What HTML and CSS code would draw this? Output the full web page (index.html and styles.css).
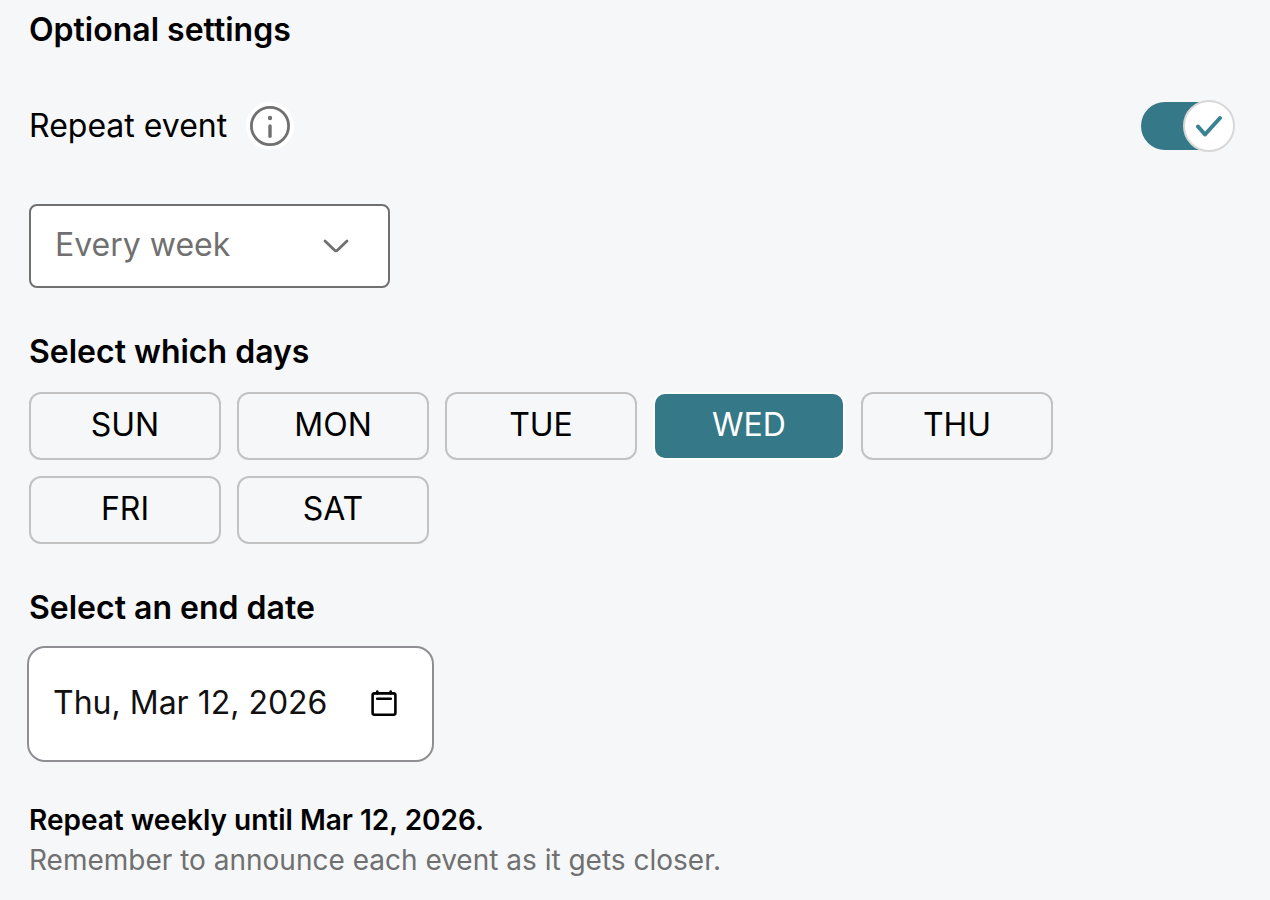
FILE: index.html
```html
<!DOCTYPE html>
<html lang="en">
<head>
  <meta charset="utf-8">
  <meta name="viewport" content="width=device-width, initial-scale=1">
  <title>Optional settings</title>
  <link rel="stylesheet" href="styles.css">
</head>
<body>
  <form class="settings">
    <h2>Optional settings</h2>

    <!-- Repeat on/off -->
    <div class="repeat-row">
      <label for="repeat">Repeat event</label>
      <button type="button" class="info-btn" aria-label="About repeating events">
        <svg width="40" height="40" viewBox="0 0 40 40" fill="none" stroke="#707070" stroke-linecap="round">
          <circle cx="20" cy="20" r="18.6" stroke-width="2.8"/>
          <path d="M20 20v10.3" stroke-width="3.4"/>
          <circle cx="20" cy="12" r="2.2" fill="#707070" stroke="none"/>
        </svg>
      </button>
      <div class="toggle">
        <input type="checkbox" id="repeat" checked>
        <span class="knob">
          <svg width="28" height="22" viewBox="0 0 28 22" fill="none" stroke="#3b8194" stroke-width="4" stroke-linecap="round" stroke-linejoin="round">
            <path d="M3 11.5l7 8L25 3"/>
          </svg>
        </span>
      </div>
    </div>

    <!-- How often -->
    <div class="select-box">
      <select aria-label="How often">
        <option>Every week</option>
        <option>Every month</option>
      </select>
      <svg class="chevron" width="28" height="16" viewBox="0 0 28 16" fill="none" stroke="#707070" stroke-width="2.8" stroke-linecap="round" stroke-linejoin="round">
        <path d="M3 3l9.6 9.2q1.4 1.2 2.8 0L25 3"/>
      </svg>
    </div>

    <h3>Select which days</h3>
    <div class="days">
      <button type="button" class="day">SUN</button>
      <button type="button" class="day">MON</button>
      <button type="button" class="day">TUE</button>
      <button type="button" class="day selected" aria-pressed="true">WED</button>
      <button type="button" class="day">THU</button>
      <button type="button" class="day">FRI</button>
      <button type="button" class="day">SAT</button>
    </div>

    <label class="date-label" for="endDate">Select an end date</label>
    <div class="date-box">
      <input type="text" id="endDate" value="Thu, Mar 12, 2026">
      <button type="button" class="calendar-btn" aria-label="Open calendar">
        <svg width="28" height="28" viewBox="0 0 28 28" fill="none" stroke="#000" stroke-width="2.6" stroke-linecap="round" stroke-linejoin="round">
          <rect x="2.6" y="4.4" width="22.8" height="21.4" rx="2"/>
          <path d="M7.3 2.6v2M20.7 2.6v2M7.2 9.8h13.6"/>
        </svg>
      </button>
    </div>

    <!-- Summary -->
    <p class="summary">Repeat weekly until Mar 12, 2026.</p>
    <p class="hint">Remember to announce each event as it gets closer.</p>
  </form>
</body>
</html>
```

FILE: styles.css
```css
* {
  box-sizing: border-box;
  margin: 0;
  padding: 0;
}

:root {
  --teal: #357888;
  --gray: #707070;
}

body {
  background-color: #f6f7f9;
  color: #000;
  font-family: Inter, "Liberation Sans", sans-serif;
  font-size: 32px;
  line-height: 40px;
}

button,
input,
select {
  font: inherit;
  color: inherit;
}

button,
select {
  cursor: pointer;
}

svg {
  display: block;
}

.settings {
  padding: 10px 35px 20px 29px;
}

h2,
h3,
.date-label {
  display: block;
  font-size: 32px;
  font-weight: 600;
}

/* Repeat row */
.repeat-row {
  display: flex;
  align-items: center;
  margin: 50px 0 52px;
}

.info-btn {
  margin-left: 19px;
  padding: 4px;
  border: none;
  border-radius: 50%;
  background-color: white;
}

.toggle {
  position: relative;
  width: 94px;
  height: 52px;
  margin-left: auto;
  padding: 2px 0;
}

.toggle input {
  display: block;
  appearance: none;
  width: 90px;
  height: 48px;
  border-radius: 24px;
  background-color: var(--teal);
  cursor: pointer;
}

.knob {
  position: absolute;
  top: 0;
  right: 0;
  display: flex;
  align-items: center;
  justify-content: center;
  width: 52px;
  height: 52px;
  border: 2px solid #d8d8d8;
  border-radius: 50%;
  background-color: white;
  pointer-events: none;
}

/* Frequency drop-down */
.select-box {
  position: relative;
  width: 361px;
}

.select-box select {
  display: block;
  appearance: none;
  width: 100%;
  height: 84px;
  padding: 0 24px 2px;
  border: 2px solid var(--gray);
  border-radius: 8px;
  background-color: white;
  color: var(--gray);
}

.chevron {
  position: absolute;
  right: 40px;
  top: 34px;
  pointer-events: none;
}

/* Days of the week */
h3 {
  margin: 44px 0 20px;
}

.days {
  display: flex;
  flex-wrap: wrap;
  gap: 16px;
}

.day {
  width: 192px;
  height: 68px;
  padding-bottom: 2px;
  border: 2px solid #c2c2c2;
  border-radius: 12px;
  background-color: transparent;
}

.day.selected {
  border-color: white;
  background-color: var(--teal);
  color: white;
}

/* End date */
.date-label {
  margin: 44px 0 18px;
}

.date-box {
  display: flex;
  align-items: center;
  justify-content: space-between;
  width: 407px;
  height: 116px;
  margin-left: -2px;
  padding: 0 34px 2px 24px;
  border: 2px solid #8e8e93;
  border-radius: 18px;
  background-color: white;
}

.date-box input {
  width: 300px;
  border: none;
  background: none;
  color: #111;
  outline: none;
}

.calendar-btn {
  border: none;
  background: none;
}

/* Summary text */
.summary,
.hint {
  font-size: 28px;
}

.summary {
  margin-top: 38px;
  font-weight: 600;
}

.hint {
  color: var(--gray);
}
```
